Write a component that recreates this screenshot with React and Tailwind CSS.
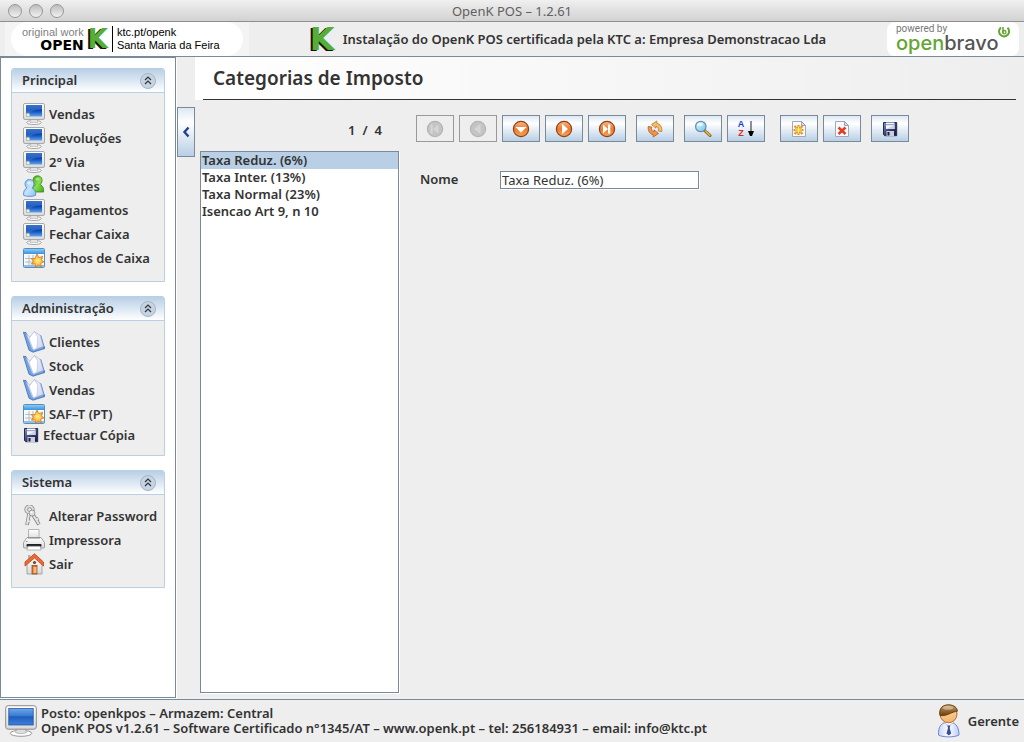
import React, { useState } from "react";

function Gradients() {
  return (
    <svg width="0" height="0" className="absolute" aria-hidden="true">
      <defs>
        <linearGradient id="screen" x1="0" y1="0" x2="0" y2="1">
          <stop offset="0" stopColor="#1c5fc4" />
          <stop offset="0.5" stopColor="#0a48b4" />
          <stop offset="1" stopColor="#5fa2f0" />
        </linearGradient>
        <linearGradient id="screenLarge" x1="0" y1="0" x2="0" y2="1">
          <stop offset="0" stopColor="#6ea6e8" />
          <stop offset="0.45" stopColor="#3a7bd0" />
          <stop offset="0.5" stopColor="#1d5dbd" />
          <stop offset="1" stopColor="#3f83dc" />
        </linearGradient>
        <linearGradient id="shell" x1="0" y1="0" x2="0" y2="1">
          <stop offset="0" stopColor="#ffffff" />
          <stop offset="1" stopColor="#d9d9d9" />
        </linearGradient>
        <linearGradient id="personBlue" x1="0" y1="0" x2="1" y2="1">
          <stop offset="0" stopColor="#7db7f2" />
          <stop offset="0.5" stopColor="#c6e2fd" />
          <stop offset="1" stopColor="#8cc0f5" />
        </linearGradient>
        <linearGradient id="personGreen" x1="0" y1="0" x2="1" y2="1">
          <stop offset="0" stopColor="#3fa416" />
          <stop offset="0.5" stopColor="#8ade4a" />
          <stop offset="1" stopColor="#43a81b" />
        </linearGradient>
        <linearGradient id="calTop" x1="0" y1="0" x2="0" y2="1">
          <stop offset="0" stopColor="#8ccaf4" />
          <stop offset="1" stopColor="#3794dc" />
        </linearGradient>
        <radialGradient id="star">
          <stop offset="0" stopColor="#fff27a" />
          <stop offset="1" stopColor="#f9a12d" />
        </radialGradient>
        <linearGradient id="page" x1="0" y1="0" x2="1" y2="1">
          <stop offset="0" stopColor="#ffffff" />
          <stop offset="1" stopColor="#ccd3ee" />
        </linearGradient>
        <linearGradient id="orange" x1="0" y1="0" x2="0" y2="1">
          <stop offset="0" stopColor="#f9b98a" />
          <stop offset="0.5" stopColor="#ee7a2e" />
          <stop offset="1" stopColor="#f7a35a" />
        </linearGradient>
        <linearGradient id="disk" x1="0" y1="0" x2="1" y2="1">
          <stop offset="0" stopColor="#8d98c0" />
          <stop offset="0.5" stopColor="#3a4272" />
          <stop offset="1" stopColor="#101431" />
        </linearGradient>
        <linearGradient id="skin" x1="0" y1="0" x2="0" y2="1">
          <stop offset="0" stopColor="#fbd9a8" />
          <stop offset="1" stopColor="#f3b46c" />
        </linearGradient>
        <linearGradient id="shirt" x1="0" y1="0" x2="1" y2="0">
          <stop offset="0" stopColor="#c3d3fa" />
          <stop offset="0.5" stopColor="#ffffff" />
          <stop offset="1" stopColor="#b9ccf8" />
        </linearGradient>
        <linearGradient id="hair" x1="0" y1="0" x2="0" y2="1">
          <stop offset="0" stopColor="#c79a5c" />
          <stop offset="1" stopColor="#6b3f10" />
        </linearGradient>
        <linearGradient id="lens" x1="0" y1="0" x2="1" y2="1">
          <stop offset="0" stopColor="#e4fbff" />
          <stop offset="1" stopColor="#6fc4ea" />
        </linearGradient>
      </defs>
    </svg>
  );
}

function Svg({ size = 22, children }) {
  return (
    <svg width={size} height={size} viewBox={`0 0 ${size} ${size}`} className="shrink-0" aria-hidden="true">
      {children}
    </svg>
  );
}

const MonitorIcon = () => (
  <Svg>
    <ellipse cx="11" cy="19.5" rx="7.3" ry="2" fill="#fff" stroke="#8f8f8f" strokeWidth="0.8" />
    <path d="M8 16h6l1 3.5H7z" fill="#e2e2e2" stroke="#a5a5a5" strokeWidth="0.5" />
    <rect x="0.5" y="0.5" width="21" height="16" rx="1.5" fill="url(#shell)" stroke="#a8a8a8" />
    <rect x="3" y="2" width="16" height="11.5" fill="url(#screen)" />
    <path d="M3 2h16v4C13 6.5 8 8 3 12z" fill="#fff" opacity="0.12" />
    <rect x="3.5" y="10.5" width="3" height="2.5" fill="#fff7b8" />
  </Svg>
);

const LargeMonitorIcon = () => (
  <Svg size={32}>
    <ellipse cx="16" cy="28.3" rx="10.8" ry="3" fill="#fff" stroke="#8c8c8c" strokeWidth="0.9" />
    <path d="M12 23h8l1.5 4.5c-3 1.6-8 1.6-11 0z" fill="#dedede" stroke="#9a9a9a" strokeWidth="0.6" />
    <rect x="0.7" y="0.7" width="30.6" height="23.5" rx="2.4" fill="url(#shell)" stroke="#8c8c8c" />
    <rect x="3.8" y="3.5" width="24.4" height="16.5" fill="url(#screenLarge)" stroke="#18469a" strokeWidth="0.7" />
  </Svg>
);

const PeopleIcon = () => (
  <Svg>
    <path d="M9.3 17c-.5-4 1-6.5 3-7.3C8.5 7 9.5 .8 14.5 .8s6 6 2.500 8.700c2.800 1 4.200 4.500 3.500 7.500z" fill="url(#personGreen)" stroke="#2d8411" strokeWidth="0.8" />
    <path d="M.6 20.3c-.3-4 .9-6 3.2-7.2C.6 9.500 2 4.500 6.500 4.500s6 5 2.600 8.400c2.600 1.300 3.900 3.800 3.500 7.400-3 1.500-9 1.500-12 0z" fill="url(#personBlue)" stroke="#4684c4" strokeWidth="0.8" />
    <ellipse cx="6" cy="8" rx="2" ry="1.7" fill="#fff" opacity="0.6" />
    <ellipse cx="14.5" cy="4" rx="2" ry="1.5" fill="#fff" opacity="0.4" />
  </Svg>
);

const CalendarIcon = () => (
  <Svg>
    <rect x="0.5" y="1.5" width="21" height="19" rx="1" fill="#fff" stroke="#5b8db8" />
    <rect x="1" y="2" width="20" height="5" fill="url(#calTop)" />
    <rect x="2" y="8" width="18" height="10" fill="#f5f7fa" />
    <path d="M2 11.5h18M2 15h18M6 8v10M10 8v10M14 8v10" stroke="#b4bcc6" strokeWidth="1" />
    <rect x="1" y="18" width="20" height="2" fill="#8fbfe2" />
    <path d="M14 7l1.7 3.600 4-1.200-1.600 3.500 3 1.900-3.400 1.300.6 3.600-3-1.700-2.600 2.300-.6-3.500-3.800.3 2.200-2.900-2.200-2.600 3.600.2z" fill="url(#star)" stroke="#d9761c" strokeWidth="0.8" />
  </Svg>
);

const BookIcon = () => (
  <Svg>
    <path d="M.4 1.2L3 1.6l7 16.500 10.500-3.600 1.400 3L10 21.200l-4-2z" fill="#6ea2e6" stroke="#3565ae" strokeWidth="0.7" />
    <path d="M17 4l1.200.5L22 17.300l-1.500.5z" fill="#4a80d0" />
    <path d="M3 2.500L6.500 6l4.500 12.500L9 18z" fill="#eef2fd" stroke="#8f9fd0" strokeWidth="0.6" />
    <path d="M6 7.500L11.300.5 17.300 4.500 20.500 15.500 10.500 19z" fill="url(#page)" stroke="#9aa7d6" strokeWidth="0.6" />
    <path d="M11.300 .6L14.800 6 13.800 17 10.500 19 6 7.500z" fill="#fff" stroke="#b4bde0" strokeWidth="0.6" />
  </Svg>
);

const DiskIcon = () => (
  <Svg size={16}>
    <path d="M1.500 1.500h13.200v13.200H2.700l-1.200-1.200z" fill="url(#disk)" stroke="#252b55" />
    <rect x="4" y="1.500" width="8.500" height="6.500" fill="#f4f6fb" />
    <rect x="4" y="3" width="8.500" height="1.200" fill="#9aa6cc" />
    <path d="M4 8l8.500-4V8z" fill="#ccd3e6" />
    <rect x="4.500" y="10" width="7.500" height="5" fill="#c9cede" />
    <rect x="5.500" y="11" width="2" height="3.500" fill="#1a1f40" />
  </Svg>
);

const KeysIcon = () => (
  <Svg>
    <g fill="none" stroke="#858585" strokeWidth="3.600" strokeLinejoin="round">
      <circle cx="6.500" cy="4.500" r="3.300" />
      <path d="M6 9L4 20M9.500 9L16 19.500M4.500 16l2.500.5M13 15l2.500-1.500" />
    </g>
    <g fill="none" stroke="#e4e4e4" strokeWidth="2">
      <circle cx="6.500" cy="4.500" r="3.300" />
      <path d="M6 9L4 19.500M9.500 9l6.300 10M4.500 16l2.500.5M13 15l2.200-1.300" />
    </g>
    <circle cx="9" cy="8" r="3" fill="#dedede" stroke="#8c8c8c" strokeWidth="0.800" />
    <circle cx="8.500" cy="7.500" r="1" fill="#fff" />
  </Svg>
);

const PrinterIcon = () => (
  <Svg>
    <path d="M5.500 .5h10.500v10H5.500z" fill="url(#shell)" stroke="#a5a5a5" strokeWidth="0.800" />
    <path d="M4 8.500h14l3.500 5v4.500q0 1-1 1h-19q-1 0-1-1V13.500z" fill="url(#shell)" stroke="#8b8b8b" strokeWidth="0.800" />
    <path d="M5 9h12" stroke="#888" />
    <rect x="3.500" y="15" width="15" height="2.800" rx="1" fill="#222" />
    <path d="M5 17.300h12l1.200 3.700H3.800z" fill="#fff" stroke="#9a9a9a" strokeWidth="0.700" />
    <rect x="3" y="12" width="1.500" height="1" fill="#4fbf35" />
  </Svg>
);

const HouseIcon = () => (
  <Svg>
    <path d="M4 10.500l7.500-7 7.500 7V21H4z" fill="url(#shell)" stroke="#949494" strokeWidth="0.800" />
    <rect x="9" y="12.500" width="5" height="8.500" fill="#db752e" stroke="#8b431a" strokeWidth="0.700" />
    <rect x="10.500" y="14" width="3" height="6" fill="#f6b77a" />
    <circle cx="11.500" cy="9.500" r="1.600" fill="#774522" />
    <path d="M5 6.500V2h2.500v2z" fill="#b2b2b2" />
    <path d="M2 13V9L11.500.8 20.500 9v4L11.500 5z" fill="#ee6a32" stroke="#bd431a" strokeWidth="0.800" />
  </Svg>
);

const ManagerIcon = () => (
  <svg width="24" height="34" viewBox="0 0 24 34" className="shrink-0" aria-hidden="true">
    <path d="M1.500 31c-.4-8 2.500-11.500 7-12.500h6c4.500 1 7.500 4.500 7.500 12.500-4 2.500-16.500 2.500-20.500 0z" fill="url(#shirt)" stroke="#6f86cf" strokeWidth="1" />
    <path d="M7 18.500l4.700 3.500 5-3.500-2.700-3H9.500z" fill="#fff" stroke="#8ea0dc" strokeWidth="0.600" />
    <path d="M10.300 21.500h3l-.6 2.500 1.500 5.500-2.300 2-2.400-2 1.500-5.500z" fill="#3a4d98" />
    <ellipse cx="11.500" cy="10" rx="8.500" ry="8.800" fill="url(#skin)" stroke="#a46428" strokeWidth="0.900" />
    <path d="M3 11.500C1.500 4 6 .8 11.500 .8c5.500 0 9 3 8.800 6.500C15 7.500 10 12.500 3 11.500z" fill="url(#hair)" stroke="#5f390f" strokeWidth="0.900" />
    <ellipse cx="11" cy="3.800" rx="5.500" ry="2" fill="#fff" opacity="0.400" />
  </svg>
);

function RoundArrow({ off, children }) {
  return (
    <Svg size={18}>
      <circle cx="9" cy="9" r="7.600" fill={off ? "#c4c4c4" : "url(#orange)"} stroke={off ? "#b4b4b4" : "#8e4213"} strokeWidth="1.200" />
      <g fill={off ? "#d6d6d6" : "#fff"}>{children}</g>
    </Svg>
  );
}

const FirstIcon = () => (
  <RoundArrow off>
    <path d="M4.500 4.500h2.200v9H4.500zM12.500 4.500v9L7 9z" />
  </RoundArrow>
);
const PrevIcon = () => (
  <RoundArrow off>
    <path d="M11.500 4v10L5 9z" />
  </RoundArrow>
);
const DownIcon = () => (
  <RoundArrow>
    <path d="M3.500 7h11L9 12.800z" />
  </RoundArrow>
);
const NextIcon = () => (
  <RoundArrow>
    <path d="M7 3.800v10.400L13 9z" />
  </RoundArrow>
);
const LastIcon = () => (
  <RoundArrow>
    <path d="M5 4.500v9L10 9zM10 4.500h2.300v9H10z" />
  </RoundArrow>
);
const RefreshIcon = () => (
  <Svg size={18}>
    <path d="M15.800 11.500C16.300 7 14 3.800 10.800 3.300V1L5.500 4.500 10 8.200V6.200C12 6.700 13 8.500 12.300 11z" fill="#f8bd62" stroke="#b9742c" strokeWidth="0.800" />
    <path d="M2.200 6.500C1.700 11 4 14.200 7.200 14.700V17l5.300-3.500L8 9.800V11.800C6 11.300 5 9.500 5.700 7z" fill="#f0964a" stroke="#a95e28" strokeWidth="0.800" />
  </Svg>
);
const SearchIcon = () => (
  <Svg size={18}>
    <path d="M10.500 10.500l5.500 5" stroke="#80571d" strokeWidth="3" strokeLinecap="round" />
    <path d="M11.500 11.200l4.300 4" stroke="#f4b84c" strokeWidth="1.500" strokeLinecap="round" />
    <circle cx="6.800" cy="6.500" r="5.200" fill="url(#lens)" stroke="#6690b4" strokeWidth="1.300" />
    <ellipse cx="6" cy="4.500" rx="3" ry="1.700" fill="#fff" opacity="0.600" />
  </Svg>
);
const SortIcon = () => (
  <span className="flex items-center gap-1" aria-hidden="true">
    <span className="flex flex-col font-['Liberation_Sans'] text-[9px] leading-[9px] font-bold">
      <span className="text-[#1338e8]">A</span>
      <span className="text-[#e02828]">Z</span>
    </span>
    <svg width="6" height="16" viewBox="0 0 6 16">
      <path d="M3 0v12" stroke="#222" strokeWidth="1" />
      <path d="M0 10h6l-2 5H2z" fill="#000" />
    </svg>
  </span>
);
const Sheet = ({ children }) => (
  <Svg size={18}>
    <path d="M2.500 1.500h9l4 4v11h-13z" fill="#f9f9fb" stroke="#a3a8b5" />
    <path d="M11.500 1.500v4h4z" fill="#d8dce4" stroke="#8c93a2" strokeWidth="0.800" />
    {children}
  </Svg>
);
const NewIcon = () => (
  <Sheet>
    <path d="M8.500 5v10M3.500 10h10M4.500 6l8 8M12.500 6l-8 8" stroke="#e09326" strokeWidth="2.200" />
    <path d="M8.500 6.500v7M5 10h7M6 7.500l5 5M11 7.500l-5 5" stroke="#fff06a" strokeWidth="1" />
  </Sheet>
);
const DeleteIcon = () => (
  <Sheet>
    <path d="M5.500 7.500l7 6.500M12.500 7.500l-7 6.500" stroke="#e23c25" strokeWidth="2.500" />
  </Sheet>
);

const groups = [
  {
    title: "Principal",
    items: [
      ["Vendas", MonitorIcon],
      ["Devoluções", MonitorIcon],
      ["2° Via", MonitorIcon],
      ["Clientes", PeopleIcon],
      ["Pagamentos", MonitorIcon],
      ["Fechar Caixa", MonitorIcon],
      ["Fechos de Caixa", CalendarIcon],
    ],
  },
  {
    title: "Administração",
    items: [
      ["Clientes", BookIcon],
      ["Stock", BookIcon],
      ["Vendas", BookIcon],
      ["SAF–T (PT)", CalendarIcon],
      ["Efectuar Cópia", DiskIcon],
    ],
  },
  {
    title: "Sistema",
    items: [
      ["Alterar Password", KeysIcon],
      ["Impressora", PrinterIcon],
      ["Sair", HouseIcon],
    ],
  },
];

const navigation = [
  [
    ["Primeiro", FirstIcon, true],
    ["Anterior", PrevIcon, true],
    ["Abaixo", DownIcon],
    ["Seguinte", NextIcon],
    ["Último", LastIcon],
  ],
  [["Actualizar", RefreshIcon]],
  [
    ["Procurar", SearchIcon],
    ["Ordenar", SortIcon],
  ],
];

const editing = [
  [
    ["Novo", NewIcon],
    ["Eliminar", DeleteIcon],
  ],
  [["Guardar", DiskIcon]],
];

const taxes = ["Taxa Reduz. (6%)", "Taxa Inter. (13%)", "Taxa Normal (23%)", "Isencao Art 9, n 10"];

function GreenK({ className = "" }) {
  return (
    <span className={`font-['DejaVu_Sans',sans-serif] font-bold text-[#58ad34] [text-shadow:-2px_1px_0_#111] ${className}`}>
      K
    </span>
  );
}

function TitleBar() {
  return (
    <div className="grid h-[22px] shrink-0 grid-cols-3 items-center border-b border-[#8e8e8e] bg-linear-to-b from-[#f0f0f0] to-[#d2d2d2] px-2">
      <div className="flex gap-[7px]">
        {["Fechar", "Minimizar", "Maximizar"].map((n) => (
          <button key={n} aria-label={n} className="size-[14px] rounded-full border border-[#979797] bg-linear-to-b from-[#bdbdbd] to-[#f2f2f2]" />
        ))}
      </div>
      <div className="text-center leading-[20px] font-normal text-[#606060]">OpenK POS – 1.2.61</div>
    </div>
  );
}

function Header() {
  return (
    <header className="flex h-[35px] shrink-0 items-stretch justify-between border-b border-[#7a8a99] px-[5px]">
      <div className="flex w-[244px] bg-[#f4f4f4] pl-[6px]">
        <div className="flex w-[232px] items-center rounded-[17px] bg-white pl-[11px] font-['Liberation_Sans',sans-serif] text-[11px] leading-[13px] font-normal text-black">
          <div className="flex flex-col items-end pr-1">
            <span className="text-[#808080]">original work</span>
            <span className="font-['DejaVu_Sans',sans-serif] text-[14px] leading-[13px] font-bold">OPEN</span>
          </div>
          <GreenK className="text-[26px] leading-[30px]" />
          <div className="ml-1 border-l border-black pl-1">
            <div>ktc.pt/openk</div>
            <div>Santa Maria da Feira</div>
          </div>
        </div>
      </div>
      <div className="flex items-center gap-2">
        <GreenK className="text-[32px] leading-[32px]" />
        <span>Instalação do OpenK POS certificada pela KTC a: Empresa Demonstracao Lda</span>
      </div>
      <div className="w-[132px] rounded-[8px] bg-white pt-[2px] pl-[9px]">
        <div className="font-['Roboto',sans-serif] text-[10px] leading-[10px] font-normal text-[#777777]">powered by</div>
        <div className="flex">
          <span className="font-['Inter',sans-serif] text-[20px] leading-[18px] font-medium text-[#62a532]">
            open<span className="text-[#555555]">bravo</span>
          </span>
          <svg width="12" height="12" viewBox="0 0 12 12" className="-mt-[8px]" aria-hidden="true">
            <path d="M3 1.500A5 5 0 1 0 9.500 1.800" fill="none" stroke="#62a532" strokeWidth="2" />
            <path d="M5 1v6" stroke="#62a532" strokeWidth="1.500" />
            <circle cx="6.300" cy="6.200" r="1.700" fill="none" stroke="#62a532" strokeWidth="1.300" />
          </svg>
        </div>
      </div>
    </header>
  );
}

function TaskGroup({ title, items }) {
  const [open, setOpen] = useState(true);
  return (
    <section className="rounded-t-[3px] border border-[#b8cfe5]">
      <h2 className="flex h-[24px] items-center justify-between rounded-t-[2px] border-b border-[#b8cfe5] bg-linear-to-b from-[#b8cfe5] to-white pr-2 pl-[10px]">
        {title}
        <button
          onClick={() => setOpen(!open)}
          aria-label={`Recolher ${title}`}
          className="grid size-4 place-items-center rounded-full border border-[#a9b3bf] bg-[#c5d4e4]"
        >
          <svg width="8" height="9" viewBox="0 0 8 9" fill="none" stroke="#333" strokeWidth="1.200" aria-hidden="true">
            <path d="M1 4l3-3 3 3M1 8l3-3 3 3" />
          </svg>
        </button>
      </h2>
      {open && (
        <ul className="bg-[#eeeeee] pt-[9px] pb-[11px] pl-[11px]">
          {items.map(([label, Icon]) => (
            <li key={label}>
              <a href="#" className={`flex items-center gap-1 whitespace-nowrap ${Icon === DiskIcon ? "h-[18px]" : "h-6"}`}>
                <Icon />
                {label}
              </a>
            </li>
          ))}
        </ul>
      )}
    </section>
  );
}

function ButtonSets({ sets }) {
  return (
    <div className="flex gap-[10px]">
      {sets.map((set, i) => (
        <div key={i} className="flex gap-[5px]">
          {set.map(([label, Icon, off]) => (
            <button
              key={label}
              aria-label={label}
              disabled={off}
              className={`grid h-[27px] w-[38px] place-items-center border ${
                off ? "border-[#999999]" : "border-[#7a8a99] bg-linear-to-b from-[#dde8f3] via-white via-30% to-[#b8cfe5]"
              }`}
            >
              <Icon />
            </button>
          ))}
        </div>
      ))}
    </div>
  );
}

export default function App() {
  const [selected, setSelected] = useState(0);
  const [name, setName] = useState(taxes[0]);
  const [menu, setMenu] = useState(true);
  return (
    <div className="flex h-screen flex-col bg-[#eeeeee] font-['Noto_Sans',sans-serif] text-[13px] leading-[17px] font-semibold text-[#333333]">
      <Gradients />
      <TitleBar />
      <Header />
      <div className="flex min-h-0 flex-1">
        {menu && (
          <nav className="mb-[1px] flex w-[176px] shrink-0 flex-col gap-[14px] overflow-hidden border border-[#7a8a99] bg-white p-[10px] shadow-[1px_1px_0_#ffffff]">
            {groups.map((g) => (
              <TaskGroup key={g.title} {...g} />
            ))}
          </nav>
        )}
        <div className="w-[19px] shrink-0 pt-[50px] pl-[1px]">
          <button
            onClick={() => setMenu(!menu)}
            aria-label="Menu"
            className="grid h-[50px] w-[18px] place-items-center border border-[#7a8a99] bg-linear-to-b from-[#dde8f3] via-white via-30% to-[#b8cfe5]"
          >
            <svg width="8" height="12" viewBox="0 0 8 12" aria-hidden="true">
              <path d="M6.500 1.500L2.500 6l4 4.500" fill="none" stroke="#27408f" strokeWidth="2.400" />
            </svg>
          </button>
        </div>
        <main className="flex min-w-0 flex-1 flex-col">
          <div className="h-[43px] shrink-0 bg-linear-to-r from-white to-[#eeeeee] px-2">
            <h1 className="h-[43px] border-b border-[#333333] pl-[10px] text-[19px] leading-[42px]">Categorias de Imposto</h1>
          </div>
          <div className="flex min-h-0 flex-1 pb-[6px] pl-[5px]">
            <div className="flex w-[199px] shrink-0 flex-col">
              <div className="flex h-[51px] justify-end gap-[7px] pt-[22px] pr-[17px]">
                <span>1</span>
                <span>/</span>
                <span>4</span>
              </div>
              <ul role="listbox" aria-label="Categorias" className="flex-1 border border-[#7a8a99] bg-white shadow-[1px_1px_0_#ffffff]">
                {taxes.map((t, i) => (
                  <li
                    key={t}
                    role="option"
                    aria-selected={i === selected}
                    onClick={() => {
                      setSelected(i);
                      setName(t);
                    }}
                    className={`cursor-default pl-[1px] ${i === selected ? "bg-[#b8cfe5]" : ""}`}
                  >
                    {t}
                  </li>
                ))}
              </ul>
            </div>
            <div className="flex min-w-0 flex-1 flex-col gap-[29px] pt-[15px] pl-[17px]">
              <div role="toolbar" className="flex gap-[15px]">
                <ButtonSets sets={navigation} />
                <ButtonSets sets={editing} />
              </div>
              <div className="flex pl-1">
                <label htmlFor="nome" className="w-20">
                  Nome
                </label>
                <input
                  id="nome"
                  value={name}
                  onChange={(e) => setName(e.target.value)}
                  className="h-[18px] w-[199px] border border-[#7a8a99] bg-white px-[1px] font-normal shadow-[1px_1px_0_#ffffff] outline-none"
                />
              </div>
            </div>
          </div>
        </main>
      </div>
      <footer className="flex h-[43px] shrink-0 items-center justify-between border-t border-[#7a8a99] px-[5px]">
        <div className="flex items-center gap-1">
          <LargeMonitorIcon />
          <div className="leading-[15px]">
            <div>Posto: openkpos – Armazem: Central</div>
            <div>OpenK POS v1.2.61 – Software Certificado n°1345/AT – www.openk.pt – tel: 256184931 – email: info@ktc.pt</div>
          </div>
        </div>
        <div className="flex items-center gap-[7px]">
          <ManagerIcon />
          Gerente
        </div>
      </footer>
    </div>
  );
}
